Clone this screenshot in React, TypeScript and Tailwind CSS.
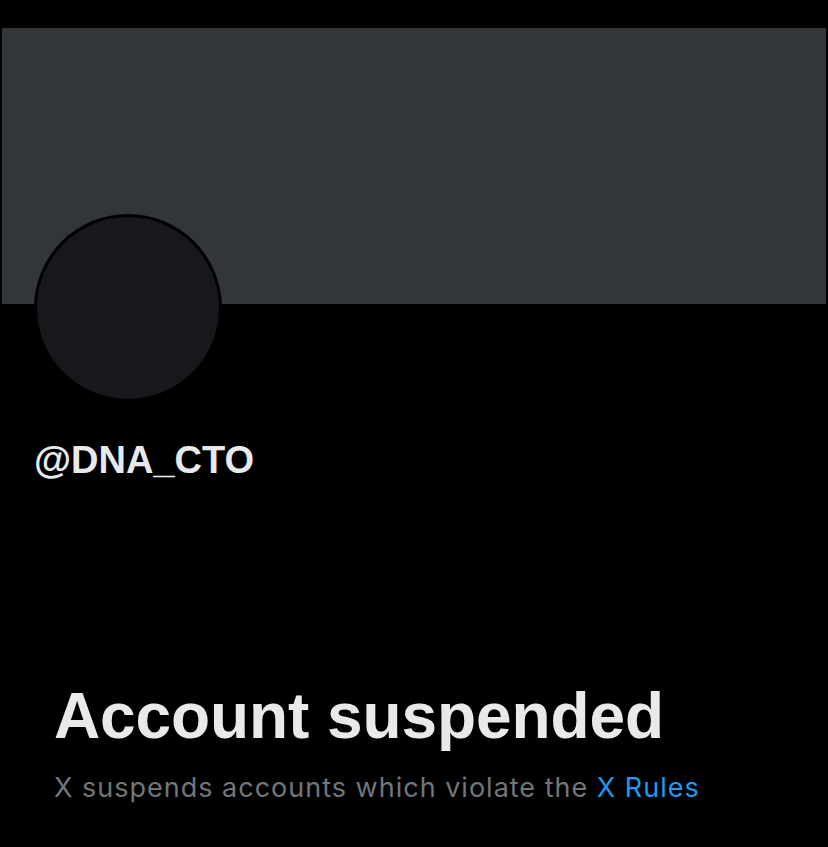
export default function App() {
  return (
    <div className="min-h-[847px] w-full bg-black pt-[28px] font-['Liberation_Sans',Arial,sans-serif]">
      <div className="mx-[2px] h-[276px] bg-[#333639]" />
      <div className="relative -mt-[90px] ml-[34px] h-[188px] w-[188px] rounded-full border-[3px] border-black bg-[#17181c]" />
      <div className="mt-[40px] pl-[34px] text-[38px] leading-[37px] font-bold text-[#e7e9ea]">@DNA_CTO</div>
      <div className="mt-[206px] pl-[54px]">
        <h1 className="text-[64px] leading-[63px] font-bold tracking-[-0.1px] text-[#e7e9ea]">Account suspended</h1>
        <p className="mt-[26px] font-['Inter',sans-serif] text-[27px] leading-[27px] tracking-[1px] text-[#71767b]">
          X suspends accounts which violate the <span className="text-[#1d9bf0]">X Rules</span>
        </p>
      </div>
    </div>
  );
}
